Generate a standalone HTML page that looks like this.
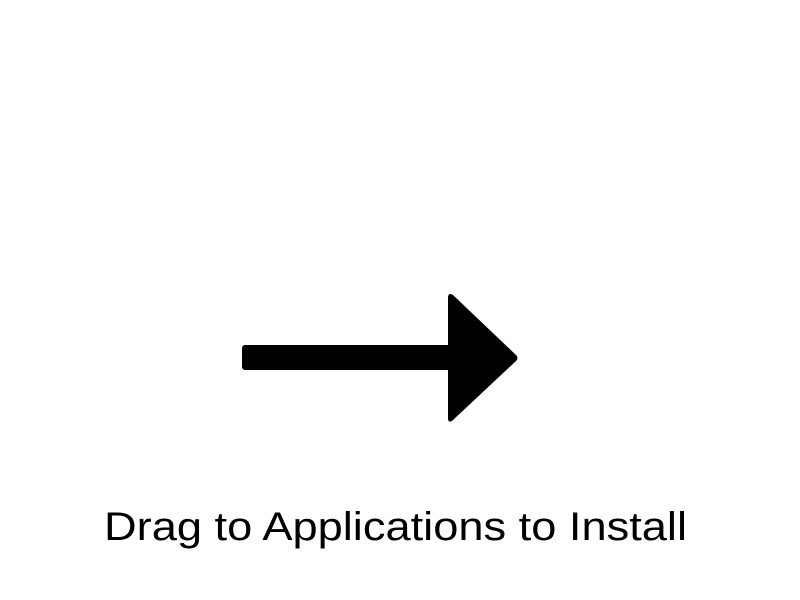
<!DOCTYPE html>
<html><head><style>html,body{margin:0;padding:0;background:#fff;width:800px;height:600px;overflow:hidden}</style></head>
<body>
<svg width="800" height="600" viewBox="0 0 800 600" xmlns="http://www.w3.org/2000/svg">
<rect x="242" y="345" width="212" height="25" rx="3" fill="#000"/>
<path d="M448 298 Q448 292 453 295 L516 355 Q519 358 516 361 L453 420 Q448 424 448 418 Z" fill="#000"/>
<text x="104" y="540" font-family="Liberation Sans, sans-serif" font-size="40" textLength="583" lengthAdjust="spacingAndGlyphs" fill="#000">Drag to Applications to Install</text>
</svg>
</body></html>
